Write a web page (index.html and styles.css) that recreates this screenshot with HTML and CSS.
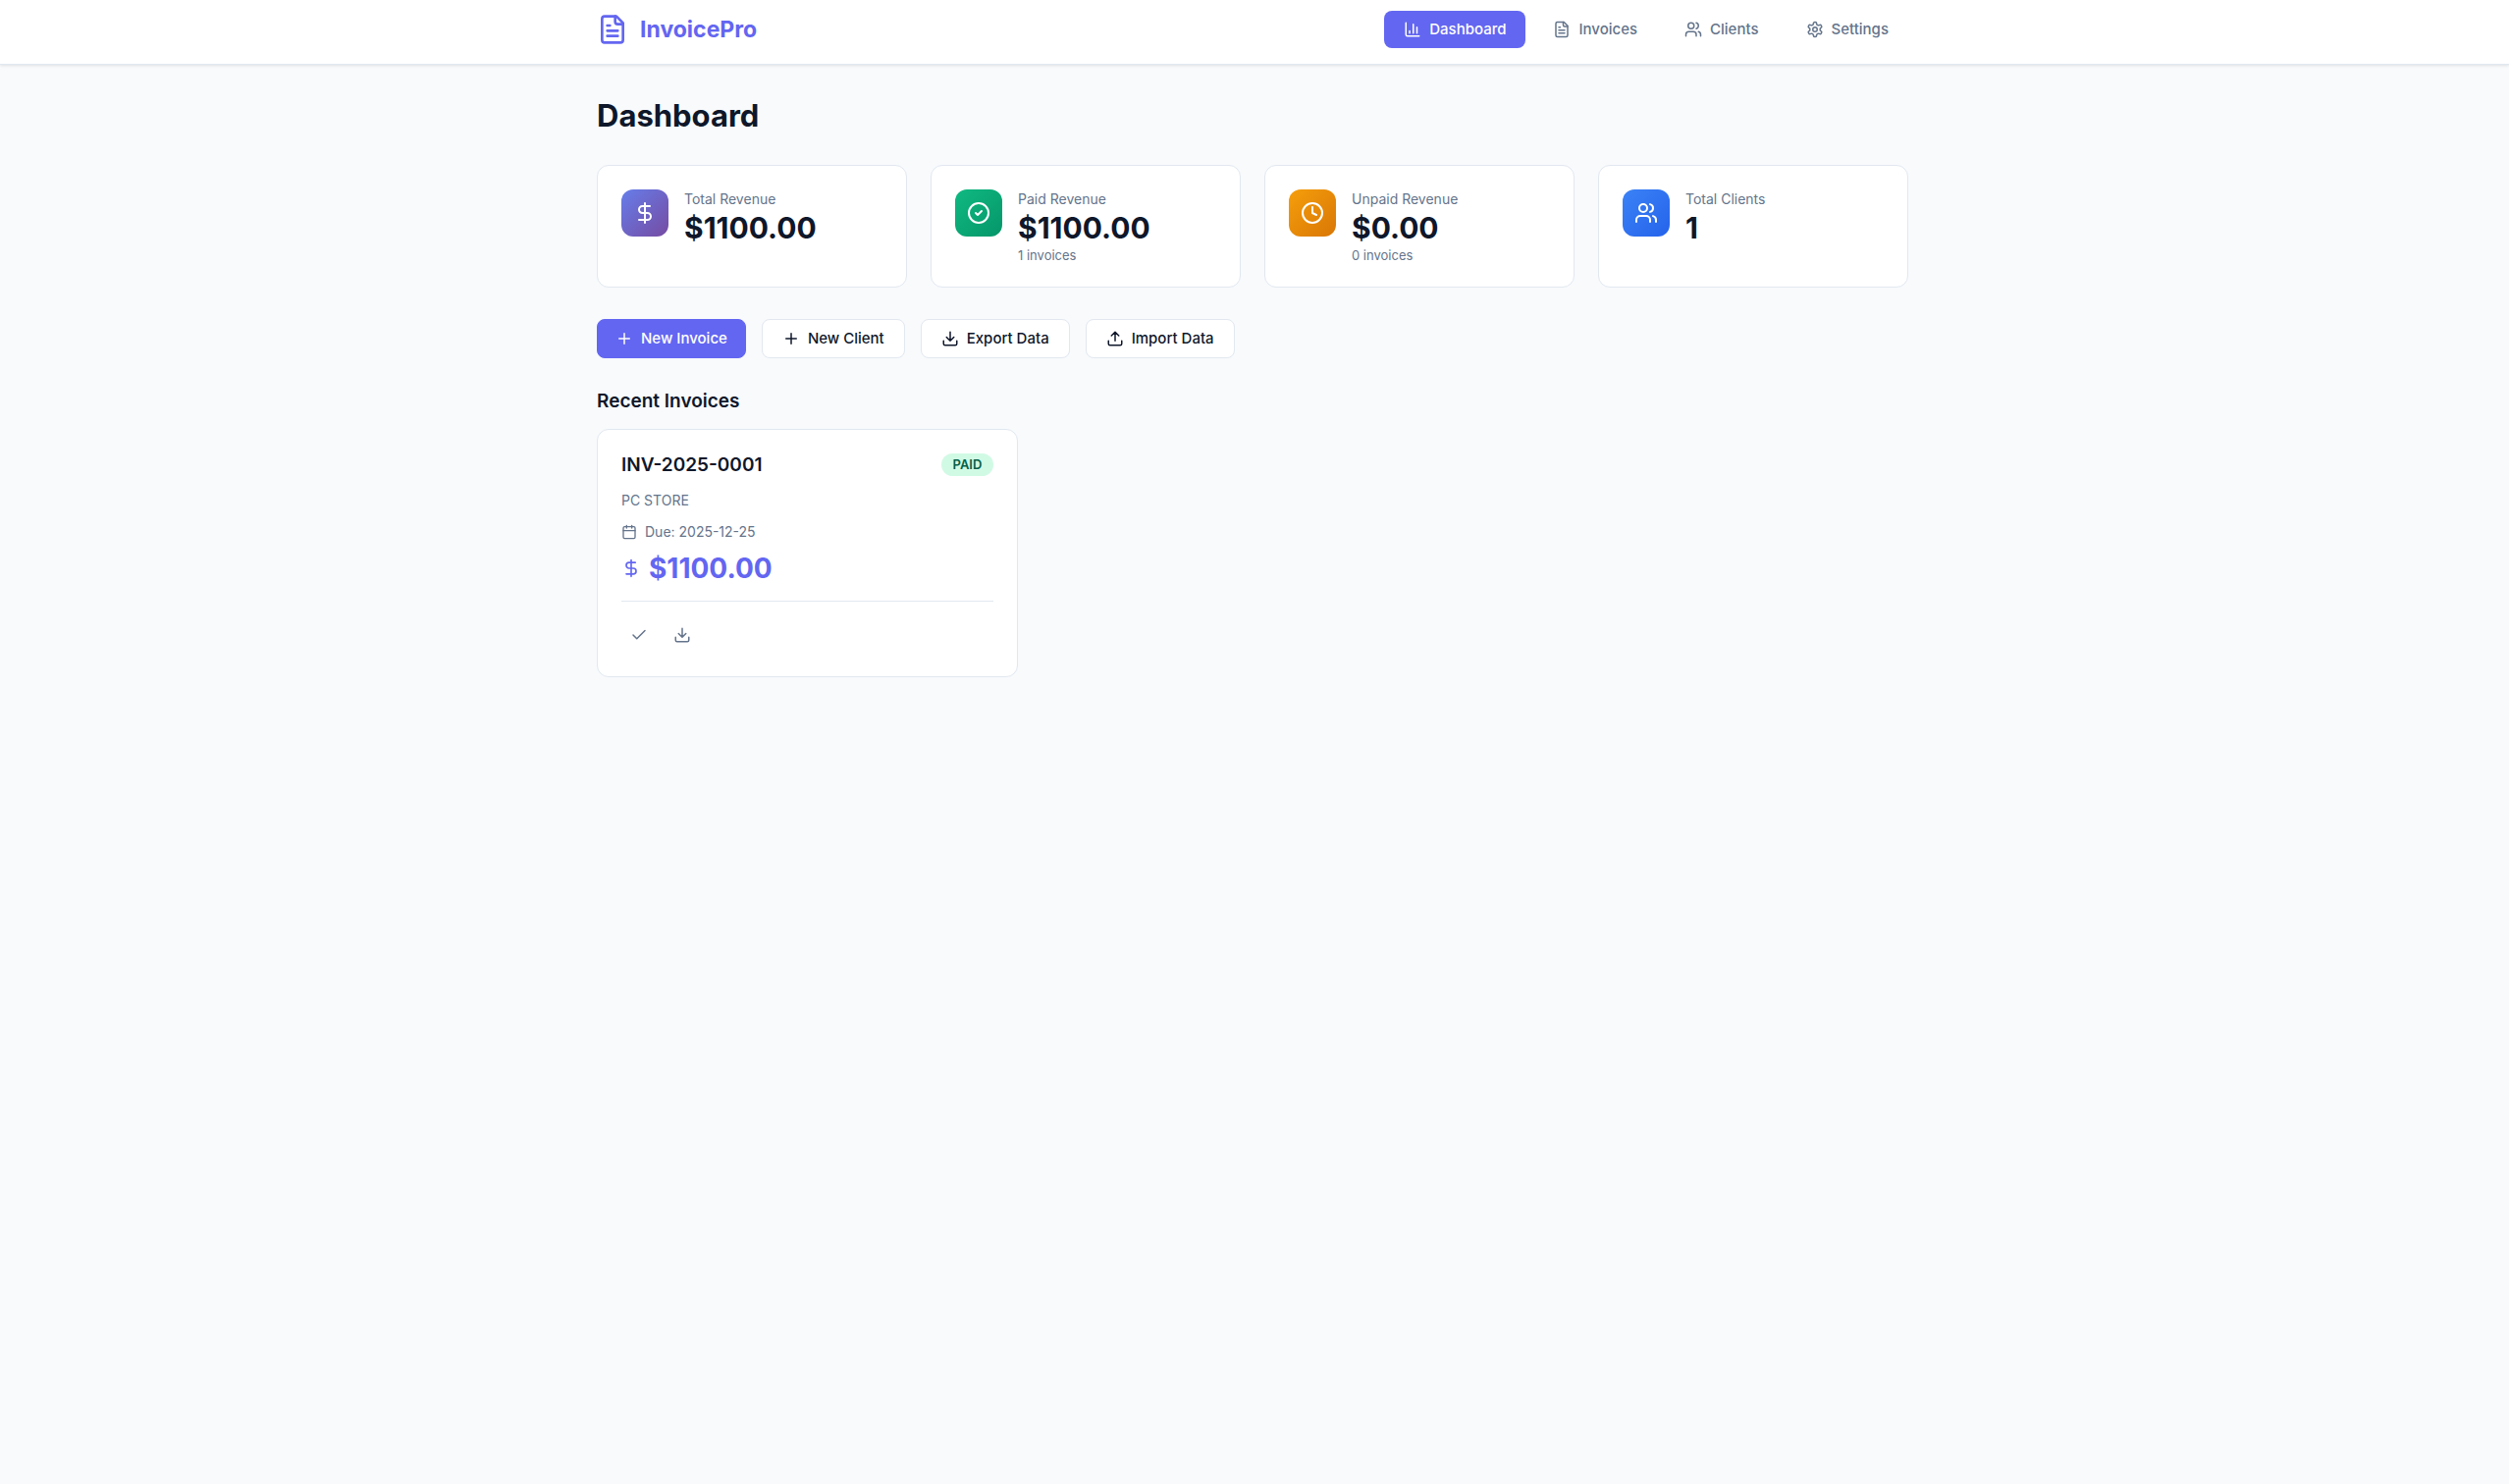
FILE: index.html
```html
<!DOCTYPE html>
<html lang="en">
<head>
<meta charset="utf-8">
<meta name="viewport" content="width=device-width, initial-scale=1">
<title>InvoicePro</title>
<link rel="stylesheet" href="styles.css">
</head>
<body>
<svg class="sprite" aria-hidden="true">
  <symbol id="file" viewBox="0 0 24 24"><path d="M15 2H6a2 2 0 0 0-2 2v16a2 2 0 0 0 2 2h12a2 2 0 0 0 2-2V7Z"/><path d="M14 2v4a2 2 0 0 0 2 2h4M10 9H8M16 13H8M16 17H8"/></symbol>
  <symbol id="chart" viewBox="0 0 24 24"><path d="M3 3v16a2 2 0 0 0 2 2h16M18 17V9M13 17V5M8 17v-3"/></symbol>
  <symbol id="users" viewBox="0 0 24 24"><path d="M16 21v-2a4 4 0 0 0-4-4H6a4 4 0 0 0-4 4v2M22 21v-2a4 4 0 0 0-3-3.870M16 3.130a4 4 0 0 1 0 7.750"/><circle cx="9" cy="7" r="4"/></symbol>
  <symbol id="settings" viewBox="0 0 24 24"><path d="M12.220 2h-.44a2 2 0 0 0-2 2v.18a2 2 0 0 1-1 1.730l-.43.25a2 2 0 0 1-2 0l-.15-.08a2 2 0 0 0-2.730.730l-.22.38a2 2 0 0 0 .730 2.730l.15.1a2 2 0 0 1 1 1.720v.51a2 2 0 0 1-1 1.740l-.15.09a2 2 0 0 0-.730 2.730l.22.38a2 2 0 0 0 2.730.730l.15-.08a2 2 0 0 1 2 0l.43.25a2 2 0 0 1 1 1.730V20a2 2 0 0 0 2 2h.44a2 2 0 0 0 2-2v-.18a2 2 0 0 1 1-1.730l.43-.25a2 2 0 0 1 2 0l.15.08a2 2 0 0 0 2.730-.730l.22-.39a2 2 0 0 0-.730-2.730l-.15-.08a2 2 0 0 1-1-1.740v-.5a2 2 0 0 1 1-1.740l.15-.09a2 2 0 0 0 .730-2.730l-.22-.38a2 2 0 0 0-2.730-.730l-.15.08a2 2 0 0 1-2 0l-.43-.25a2 2 0 0 1-1-1.730V4a2 2 0 0 0-2-2z"/><circle cx="12" cy="12" r="3"/></symbol>
  <symbol id="dollar" viewBox="0 0 24 24"><path d="M12 2v20M17 5H9.500a3.500 3.500 0 0 0 0 7h5a3.500 3.500 0 0 1 0 7H6"/></symbol>
  <symbol id="circle-check" viewBox="0 0 24 24"><circle cx="12" cy="12" r="10"/><path d="m9 12 2 2 4-4"/></symbol>
  <symbol id="clock" viewBox="0 0 24 24"><circle cx="12" cy="12" r="10"/><path d="M12 6v6l4 2"/></symbol>
  <symbol id="plus" viewBox="0 0 24 24"><path d="M5 12h14M12 5v14"/></symbol>
  <symbol id="download" viewBox="0 0 24 24"><path d="M12 15V3M21 15v4a2 2 0 0 1-2 2H5a2 2 0 0 1-2-2v-4M7 10l5 5 5-5"/></symbol>
  <symbol id="upload" viewBox="0 0 24 24"><path d="M12 3v12M17 8l-5-5-5 5M21 15v4a2 2 0 0 1-2 2H5a2 2 0 0 1-2-2v-4"/></symbol>
  <symbol id="calendar" viewBox="0 0 24 24"><path d="M8 2v4M16 2v4M3 10h18"/><rect x="3" y="4" width="18" height="18" rx="2"/></symbol>
  <symbol id="check" viewBox="0 0 24 24"><path d="M20 6 9 17l-5-5"/></symbol>
</svg>

<header class="header">
  <div class="header-inner">
    <div class="logo"><svg class="icon icon-logo"><use href="#file"/></svg><span>InvoicePro</span></div>
    <nav class="nav" aria-label="Main">
      <button class="nav-item active" type="button"><svg class="icon icon-nav"><use href="#chart"/></svg>Dashboard</button>
      <button class="nav-item" type="button"><svg class="icon icon-nav"><use href="#file"/></svg>Invoices</button>
      <button class="nav-item" type="button"><svg class="icon icon-nav"><use href="#users"/></svg>Clients</button>
      <button class="nav-item" type="button"><svg class="icon icon-nav"><use href="#settings"/></svg>Settings</button>
    </nav>
  </div>
</header>

<main class="main">
  <h1 class="title">Dashboard</h1>

  <section class="stats" aria-label="Summary">
    <div class="card stat">
      <div class="stat-icon purple"><svg class="icon icon-stat"><use href="#dollar"/></svg></div>
      <div><p class="stat-label">Total Revenue</p><p class="stat-value">$1100.00</p></div>
    </div>
    <div class="card stat">
      <div class="stat-icon green"><svg class="icon icon-stat"><use href="#circle-check"/></svg></div>
      <div><p class="stat-label">Paid Revenue</p><p class="stat-value">$1100.00</p><p class="stat-note">1 invoices</p></div>
    </div>
    <div class="card stat">
      <div class="stat-icon amber"><svg class="icon icon-stat"><use href="#clock"/></svg></div>
      <div><p class="stat-label">Unpaid Revenue</p><p class="stat-value">$0.00</p><p class="stat-note">0 invoices</p></div>
    </div>
    <div class="card stat">
      <div class="stat-icon blue"><svg class="icon icon-stat"><use href="#users"/></svg></div>
      <div><p class="stat-label">Total Clients</p><p class="stat-value">1</p></div>
    </div>
  </section>

  <div class="actions">
    <button class="btn primary" type="button"><svg class="icon icon-btn"><use href="#plus"/></svg>New Invoice</button>
    <button class="btn" type="button"><svg class="icon icon-btn"><use href="#plus"/></svg>New Client</button>
    <button class="btn" type="button"><svg class="icon icon-btn"><use href="#download"/></svg>Export Data</button>
    <button class="btn" type="button"><svg class="icon icon-btn"><use href="#upload"/></svg>Import Data</button>
  </div>

  <section>
    <h2 class="subtitle">Recent Invoices</h2>
    <div class="invoices">
      <article class="card invoice">
        <div class="invoice-head"><h3 class="invoice-number">INV-2025-0001</h3><span class="badge">PAID</span></div>
        <p class="client">PC STORE</p>
        <p class="due"><svg class="icon icon-small"><use href="#calendar"/></svg>Due: 2025-12-25</p>
        <p class="amount"><svg class="icon icon-amount"><use href="#dollar"/></svg>$1100.00</p>
        <div class="invoice-actions">
          <button class="icon-button" type="button" aria-label="Mark as paid"><svg class="icon icon-btn"><use href="#check"/></svg></button>
          <button class="icon-button" type="button" aria-label="Download"><svg class="icon icon-btn"><use href="#download"/></svg></button>
        </div>
      </article>
    </div>
  </section>
</main>
</body>
</html>
```
FILE: styles.css
```css
* { box-sizing: border-box; margin: 0; padding: 0; }

body {
  min-height: 100vh;
  background: #f8fafc;
  color: #0f172a;
  font-family: Inter, "Liberation Sans", sans-serif;
  font-size: 16px;
  line-height: 24px;
}

button { font: inherit; cursor: pointer; }

.sprite { display: none; }

.icon {
  display: block;
  flex: none;
  fill: none;
  stroke: currentColor;
  stroke-width: 2;
  stroke-linecap: round;
  stroke-linejoin: round;
}
.icon-logo { width: 32px; height: 32px; }
.icon-nav { width: 18px; height: 18px; }
.icon-stat { width: 24px; height: 24px; }
.icon-btn { width: 18px; height: 18px; }
.icon-small { width: 16px; height: 16px; }
.icon-amount { width: 20px; height: 20px; }

.header {
  padding-right: 4px;
  background: #fff;
  border-bottom: 1px solid #e2e8f0;
  box-shadow: 0 1px 3px rgb(0 0 0 / 10%);
}
.header-inner {
  display: flex;
  align-items: center;
  justify-content: space-between;
  max-width: 1400px;
  margin: 0 auto;
  padding: 11px 32px 16px;
}
.logo {
  display: flex;
  align-items: center;
  gap: 12px;
  color: #6366f1;
  font-size: 23px;
  font-weight: 700;
  line-height: 26px;
}
.nav { display: flex; gap: 8px; }
.nav-item {
  display: flex;
  align-items: center;
  gap: 8px;
  height: 38px;
  padding: 0 20px;
  border: 0;
  border-radius: 8px;
  background: none;
  color: #64748b;
  font-size: 15px;
  font-weight: 500;
}
.nav-item.active { background: #6366f1; color: #fff; }

.main {
  max-width: 1404px;
  margin: 0 auto;
  padding: 32px 36px 32px 32px;
}
.title {
  margin-bottom: 30px;
  font-size: 31px;
  font-weight: 700;
  line-height: 40px;
}

.card {
  background: #fff;
  border: 1px solid #e2e8f0;
  border-radius: 12px;
}
.stats {
  display: grid;
  grid-template-columns: repeat(auto-fit, minmax(250px, 1fr));
  gap: 24px;
  margin-bottom: 32px;
}
.stat { display: flex; align-items: flex-start; gap: 16px; padding: 24px; }
.stat-icon {
  display: grid;
  flex: none;
  place-items: center;
  width: 48px;
  height: 48px;
  border-radius: 12px;
  color: #fff;
}
.purple { background: linear-gradient(135deg, #667eea, #764ba2); }
.green { background: linear-gradient(135deg, #10b981, #059669); }
.amber { background: linear-gradient(135deg, #f59e0b, #d97706); }
.blue { background: linear-gradient(135deg, #3b82f6, #2563eb); }
.stat-label { color: #64748b; font-size: 14px; line-height: 19px; }
.stat-value { font-size: 30px; font-weight: 700; line-height: 41px; }
.stat-note { color: #64748b; font-size: 13px; line-height: 15px; }

.actions { display: flex; flex-wrap: wrap; gap: 16px; margin-bottom: 32px; }
.btn {
  display: flex;
  align-items: center;
  gap: 8px;
  height: 40px;
  padding: 0 20px;
  border: 1px solid #e2e8f0;
  border-radius: 8px;
  background: #fff;
  color: #0f172a;
  font-size: 15px;
  font-weight: 500;
}
.btn.primary {
  padding: 0 18px;
  border-color: #6366f1;
  background: #6366f1;
  color: #fff;
}

.subtitle {
  margin-bottom: 16px;
  font-size: 19px;
  font-weight: 600;
  line-height: 24px;
}

.invoices {
  display: grid;
  grid-template-columns: repeat(auto-fill, minmax(400px, 1fr));
  gap: 24px;
}
.invoice { padding: 24px; }
.invoice-head {
  display: flex;
  align-items: flex-start;
  justify-content: space-between;
  margin-bottom: 12px;
}
.invoice-number { font-size: 19px; font-weight: 600; line-height: 24px; }
.badge {
  padding: 0 12px;
  border-radius: 12px;
  background: #d1fae5;
  color: #065f46;
  font-size: 13px;
  font-weight: 600;
  line-height: 23px;
}
.client { margin-bottom: 8px; color: #64748b; font-size: 14px; }
.due {
  display: flex;
  align-items: center;
  gap: 8px;
  margin-bottom: 8px;
  color: #64748b;
  font-size: 14px;
}
.amount {
  display: flex;
  align-items: center;
  gap: 8px;
  color: #6366f1;
  font-size: 28px;
  font-weight: 700;
  line-height: 34px;
}
.invoice-actions {
  display: flex;
  gap: 8px;
  margin-top: 16px;
  padding-top: 16px;
  border-top: 1px solid #e2e8f0;
}
.icon-button {
  padding: 9px;
  border: 0;
  border-radius: 8px;
  background: none;
  color: #64748b;
}
```
